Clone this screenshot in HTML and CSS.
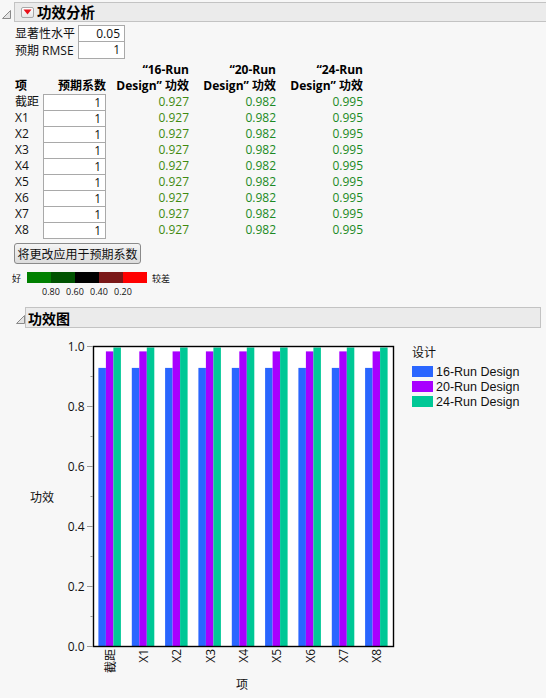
FILE: index.html
```html
<!DOCTYPE html>
<html>
<head>
<meta charset="utf-8">
<link rel="stylesheet" href="styles.css">
</head>
<body>
<div class="ol-head">
  <svg class="tri tri1" width="9" height="9" viewBox="0 0 9 9"><path d="M8.5 0.5 L8.5 8.5 L0.5 8.5 Z" fill="#e4e4e4" stroke="#8a8a8a" stroke-width="1"/></svg>
  <div class="ol-bar">
    <span class="red-btn"><svg width="9" height="6" viewBox="0 0 9 6"><path d="M0.5 0.5 L8.5 0.5 L4.5 5.5 Z" fill="#e8101a"/></svg></span>
    <span class="ol-title">功效分析</span>
  </div>
</div>

<div class="ol-body">
  <div class="params">
    <div class="prow"><span class="plabel">显著性水平</span><span class="pbox">0.05</span></div>
    <div class="prow"><span class="plabel">预期 RMSE</span><span class="pbox">1</span></div>
  </div>

  <div class="ptable">
    <div class="th th-left">项</div>
    <div class="th">预期系数</div>
    <div class="th">“16-Run<br>Design” 功效</div>
    <div class="th">“20-Run<br>Design” 功效</div>
    <div class="th">“24-Run<br>Design” 功效</div>

    <div class="term">截距</div><div class="coef">1</div><div class="v v1">0.927</div><div class="v v2">0.982</div><div class="v v2">0.995</div>
    <div class="term">X1</div><div class="coef">1</div><div class="v v1">0.927</div><div class="v v2">0.982</div><div class="v v2">0.995</div>
    <div class="term">X2</div><div class="coef">1</div><div class="v v1">0.927</div><div class="v v2">0.982</div><div class="v v2">0.995</div>
    <div class="term">X3</div><div class="coef">1</div><div class="v v1">0.927</div><div class="v v2">0.982</div><div class="v v2">0.995</div>
    <div class="term">X4</div><div class="coef">1</div><div class="v v1">0.927</div><div class="v v2">0.982</div><div class="v v2">0.995</div>
    <div class="term">X5</div><div class="coef">1</div><div class="v v1">0.927</div><div class="v v2">0.982</div><div class="v v2">0.995</div>
    <div class="term">X6</div><div class="coef">1</div><div class="v v1">0.927</div><div class="v v2">0.982</div><div class="v v2">0.995</div>
    <div class="term">X7</div><div class="coef">1</div><div class="v v1">0.927</div><div class="v v2">0.982</div><div class="v v2">0.995</div>
    <div class="term">X8</div><div class="coef last">1</div><div class="v v1">0.927</div><div class="v v2">0.982</div><div class="v v2">0.995</div>
  </div>

  <button class="apply">将更改应用于预期系数</button>

  <div class="cscale">
    <span class="cs-end cs-good">好</span>
    <span class="cs-bar">
      <span class="seg s1"></span><span class="seg s2"></span><span class="seg s3"></span><span class="seg s4"></span><span class="seg s5"></span>
    </span>
    <span class="cs-end cs-bad">较差</span>
  </div>
  <div class="cs-labels"><span>0.80</span><span>0.60</span><span>0.40</span><span>0.20</span></div>
</div>

<div class="ol-head ol-head2">
  <svg class="tri tri2" width="9" height="9" viewBox="0 0 9 9"><path d="M8.5 0.5 L8.5 8.5 L0.5 8.5 Z" fill="#e4e4e4" stroke="#8a8a8a" stroke-width="1"/></svg>
  <div class="ol-bar ol-bar2">
    <span class="ol-title ol-title2">功效图</span>
  </div>
</div>

<svg class="chart" width="546" height="368" viewBox="0 0 546 368">
  <rect x="93" y="16" width="300" height="300" fill="#ffffff"/>
  <g fill="#2a66ff">
    <rect x="98.4" y="37.9" width="7.5" height="278.1"/>
    <rect x="131.8" y="37.9" width="7.5" height="278.1"/>
    <rect x="165.1" y="37.9" width="7.5" height="278.1"/>
    <rect x="198.4" y="37.9" width="7.5" height="278.1"/>
    <rect x="231.8" y="37.9" width="7.5" height="278.1"/>
    <rect x="265.1" y="37.9" width="7.5" height="278.1"/>
    <rect x="298.4" y="37.9" width="7.5" height="278.1"/>
    <rect x="331.8" y="37.9" width="7.5" height="278.1"/>
    <rect x="365.1" y="37.9" width="7.5" height="278.1"/>
  </g>
  <g fill="#a800ff">
    <rect x="105.9" y="21.4" width="7.5" height="294.6"/>
    <rect x="139.3" y="21.4" width="7.5" height="294.6"/>
    <rect x="172.6" y="21.4" width="7.5" height="294.6"/>
    <rect x="205.9" y="21.4" width="7.5" height="294.6"/>
    <rect x="239.3" y="21.4" width="7.5" height="294.6"/>
    <rect x="272.6" y="21.4" width="7.5" height="294.6"/>
    <rect x="305.9" y="21.4" width="7.5" height="294.6"/>
    <rect x="339.3" y="21.4" width="7.5" height="294.6"/>
    <rect x="372.6" y="21.4" width="7.5" height="294.6"/>
  </g>
  <g fill="#00c896">
    <rect x="113.4" y="17.5" width="7.5" height="298.5"/>
    <rect x="146.8" y="17.5" width="7.5" height="298.5"/>
    <rect x="180.1" y="17.5" width="7.5" height="298.5"/>
    <rect x="213.4" y="17.5" width="7.5" height="298.5"/>
    <rect x="246.8" y="17.5" width="7.5" height="298.5"/>
    <rect x="280.1" y="17.5" width="7.5" height="298.5"/>
    <rect x="313.4" y="17.5" width="7.5" height="298.5"/>
    <rect x="346.8" y="17.5" width="7.5" height="298.5"/>
    <rect x="380.1" y="17.5" width="7.5" height="298.5"/>
  </g>
  <rect x="93.5" y="16.5" width="300" height="300" fill="none" stroke="#000" stroke-width="1.4"/>
  <g stroke="#9a9a9a" stroke-width="1">
    <line x1="87" y1="16.5" x2="93" y2="16.5"/>
    <line x1="87" y1="76.5" x2="93" y2="76.5"/>
    <line x1="87" y1="136.5" x2="93" y2="136.5"/>
    <line x1="87" y1="196.5" x2="93" y2="196.5"/>
    <line x1="87" y1="256.5" x2="93" y2="256.5"/>
    <line x1="87" y1="316.5" x2="93" y2="316.5"/>
    <line x1="90.5" y1="46.5" x2="93" y2="46.5"/>
    <line x1="90.5" y1="106.5" x2="93" y2="106.5"/>
    <line x1="90.5" y1="166.5" x2="93" y2="166.5"/>
    <line x1="90.5" y1="226.5" x2="93" y2="226.5"/>
    <line x1="90.5" y1="286.5" x2="93" y2="286.5"/>
  </g>
  <g class="ax" text-anchor="end">
    <text x="84.5" y="21">1.0</text>
    <text x="84.5" y="81">0.8</text>
    <text x="84.5" y="141">0.6</text>
    <text x="84.5" y="201">0.4</text>
    <text x="84.5" y="261">0.2</text>
    <text x="84.5" y="321">0.0</text>
  </g>
  <text class="ax" x="42" y="171.5" text-anchor="middle">功效</text>
  <g class="ax" text-anchor="end">
    <text transform="translate(114.5,319) rotate(-90)">截距</text>
    <text transform="translate(147.8,319) rotate(-90)">X1</text>
    <text transform="translate(181.1,319) rotate(-90)">X2</text>
    <text transform="translate(214.5,319) rotate(-90)">X3</text>
    <text transform="translate(247.8,319) rotate(-90)">X4</text>
    <text transform="translate(281.1,319) rotate(-90)">X5</text>
    <text transform="translate(314.5,319) rotate(-90)">X6</text>
    <text transform="translate(347.8,319) rotate(-90)">X7</text>
    <text transform="translate(381.1,319) rotate(-90)">X8</text>
  </g>
  <text class="ax" x="242" y="358.5" text-anchor="middle">项</text>
  <text class="ax" x="412" y="26.5">设计</text>
  <rect x="412" y="36" width="21" height="11" fill="#2a66ff"/>
  <rect x="412" y="51" width="21" height="11" fill="#a800ff"/>
  <rect x="412" y="66" width="21" height="11" fill="#00c896"/>
  <text class="lg" x="436" y="46">16-Run Design</text>
  <text class="lg" x="436" y="61">20-Run Design</text>
  <text class="lg" x="436" y="76">24-Run Design</text>
</svg>
</body>
</html>
```

FILE: styles.css
```css
html, body {
  margin: 0;
  padding: 0;
}
body {
  width: 546px;
  height: 698px;
  overflow: hidden;
  background: #f7f7f7;
  font-family: "Open Sans", "Noto Sans CJK SC", sans-serif;
  font-size: 12px;
  color: #111;
}

.ol-head {
  display: flex;
  align-items: center;
  margin-top: 2px;
  height: 20px;
}
.tri {
  flex: none;
  display: block;
}
.tri1 {
  margin: 4px 3px 0 2px;
}
.ol-bar {
  flex: 1;
  height: 20px;
  box-sizing: border-box;
  background: #ebebeb;
  border: 1px solid #c3c3c3;
  border-right: none;
  display: flex;
  align-items: center;
}
.red-btn {
  margin-left: 6px;
  width: 13px;
  height: 11px;
  box-sizing: border-box;
  border: 1px solid #a8a8a8;
  border-radius: 2px;
  background: linear-gradient(#ffffff, #e6e6e6);
  display: flex;
  align-items: center;
  justify-content: center;
}
.red-btn svg {
  display: block;
}
.ol-title {
  margin-left: 3px;
  font-family: "Noto Sans CJK SC", sans-serif;
  font-weight: bold;
  font-size: 14.5px;
  line-height: 18px;
  color: #000;
}

.ol-body {
  padding-left: 15px;
}

.params {
  margin-top: 3px;
}
.prow {
  display: flex;
  height: 17px;
  align-items: stretch;
}
.plabel {
  width: 63px;
  line-height: 17px;
}
.pbox {
  width: 47px;
  box-sizing: border-box;
  border: 1px solid #a9a9a9;
  background: #fff;
  text-align: right;
  padding-right: 4px;
  line-height: 15px;
}
.prow + .prow .pbox {
  border-top: none;
  height: 17px;
}

.ptable {
  margin-top: 3px;
  display: grid;
  grid-template-columns: 28px 63px 83px 87px 87px;
  grid-auto-rows: 16px;
  line-height: 16px;
}
.th {
  grid-row: span 2;
  align-self: end;
  text-align: right;
  font-weight: bold;
  color: #000;
}
.th-left {
  text-align: left;
}
.term {
  white-space: nowrap;
}
.coef {
  box-sizing: border-box;
  height: 16px;
  border: 1px solid #a9a9a9;
  border-bottom: none;
  background: #fff;
  text-align: right;
  padding-right: 4px;
  line-height: 15px;
}
.coef.last {
  height: 17px;
  border-bottom: 1px solid #a9a9a9;
}
.v {
  text-align: right;
}
.v1 {
  color: #3f8a10;
}
.v2 {
  color: #1b8a24;
}

.apply {
  display: block;
  margin: 5px 0 0 -1px;
  width: 127px;
  height: 21px;
  padding: 0;
  box-sizing: border-box;
  border: 1px solid #8a8a8a;
  border-radius: 3px;
  background: linear-gradient(#f4f4f4, #dcdcdc);
  font-family: "Noto Sans CJK SC", sans-serif;
  font-size: 12px;
  line-height: 18px;
  color: #111;
}

.cscale {
  margin-top: 8px;
  margin-left: -3px;
  display: flex;
  align-items: flex-end;
  height: 12px;
}
.cs-end {
  font-family: "Noto Sans CJK SC", sans-serif;
  font-size: 9px;
  line-height: 10px;
}
.cs-good {
  width: 15px;
}
.cs-bar {
  display: flex;
  margin-bottom: 1px;
}
.seg {
  width: 24px;
  height: 11px;
}
.s1 { background: #008000; }
.s2 { background: #005200; }
.s3 { background: #000000; }
.s4 { background: #7a1818; }
.s5 { background: #ff0000; }
.cs-bad {
  margin-left: 5px;
}
.cs-labels {
  display: flex;
  margin-left: 24px;
  margin-top: 2px;
  height: 12px;
}
.cs-labels span {
  width: 24px;
  text-align: center;
  font-size: 9px;
  line-height: 12px;
}

.ol-head2 {
  margin-top: 9px;
  height: 21px;
}
.tri2 {
  margin: 4px 0 0 16px;
}
.ol-bar2 {
  height: 21px;
  margin-right: 5px;
  border-right: 1px solid #c3c3c3;
}
.ol-title2 {
  margin-left: 2px;
  font-size: 14px;
}

.chart {
  display: block;
  margin-top: 2px;
}
.ax {
  font-family: "Open Sans", "Noto Sans CJK SC", sans-serif;
  font-size: 12px;
  fill: #111;
}
.lg {
  font-family: "Liberation Sans", sans-serif;
  font-size: 12.5px;
  fill: #111;
}
```
